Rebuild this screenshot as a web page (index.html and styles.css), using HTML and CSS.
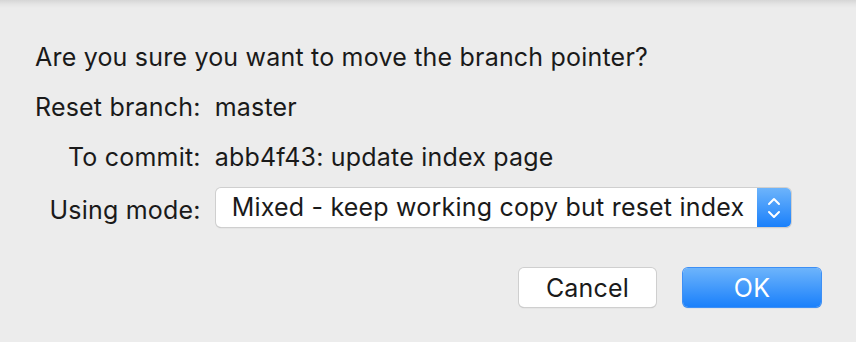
FILE: index.html
```html
<!DOCTYPE html>
<html lang="en">

<head>
    <meta charset="UTF-8">
    <title>Reset</title>
    <link rel="stylesheet" href="styles.css">
</head>

<body>
    <div class="sheet">
        <p class="question">Are you sure you want to move the branch pointer?</p>

        <div class="form">
            <span class="label">Reset branch:</span>
            <span class="value">master</span>

            <span class="label">To commit:</span>
            <span class="value">abb4f43: update index page</span>

            <span class="label">Using mode:</span>
            <div class="select">
                <span class="select-text">Mixed - keep working copy but reset index</span>
                <span class="stepper">
                    <svg width="16" height="28" viewBox="0 0 16 28">
                        <path d="M3 10 L8 5 L13 10" fill="none" stroke="#fff" stroke-width="2" stroke-linecap="round" stroke-linejoin="round"/>
                        <path d="M3 18 L8 23 L13 18" fill="none" stroke="#fff" stroke-width="2" stroke-linecap="round" stroke-linejoin="round"/>
                    </svg>
                </span>
            </div>
        </div>

        <div class="buttons">
            <button class="btn">Cancel</button>
            <button class="btn primary">OK</button>
        </div>
    </div>
</body>

</html>
```

FILE: styles.css
```css
* {
    margin: 0;
    padding: 0;
    box-sizing: border-box;
}

html,
body {
    width: 100%;
    height: 100%;
}

body {
    background: #ececec;
    font-family: "Inter", "Liberation Sans", sans-serif;
    font-size: 25px;
    letter-spacing: 0.2px;
    color: #1a1a1a;
}

.sheet {
    height: 100%;
    padding: 42px 35px 0 35px;
    background: linear-gradient(#d6d6d6 0, #e4e4e4 4px, #ececec 8px);
}

.question {
    line-height: 30px;
}

.form {
    display: grid;
    grid-template-columns: auto 1fr;
    column-gap: 14px;
    row-gap: 20px;
    margin-top: 20px;
    align-items: center;
}

.label {
    text-align: right;
    line-height: 30px;
}

.value {
    line-height: 30px;
}

.select {
    display: flex;
    width: 575px;
    height: 39px;
    margin-top: -4px;
    margin-left: 1px;
    background: #fff;
    border-radius: 5px;
    box-shadow: 0 0 0 1px #cfcfcf, 0 1px 1px #aaa;
    overflow: hidden;
}

.select-text {
    flex: 1;
    padding-left: 16px;
    line-height: 39px;
    white-space: nowrap;
}

.stepper {
    width: 34px;
    display: flex;
    align-items: center;
    justify-content: center;
    background: linear-gradient(#6db4fb, #1a80fb);
}

.buttons {
    display: flex;
    justify-content: flex-end;
    gap: 27px;
    margin-top: 41px;
}

.btn {
    width: 137px;
    height: 39px;
    font-family: inherit;
    font-size: 25px;
    letter-spacing: 0.2px;
    color: #1a1a1a;
    background: #fff;
    border: none;
    border-radius: 5px;
    box-shadow: 0 0 0 1px #cfcfcf, 0 1px 1px #aaa;
}

.btn.primary {
    width: 138px;
    color: #fff;
    background: linear-gradient(#6db4fb, #1a80fb);
    box-shadow: 0 0 0 1px #3d8ff5, 0 1px 1px #6a9ad0;
}
```
